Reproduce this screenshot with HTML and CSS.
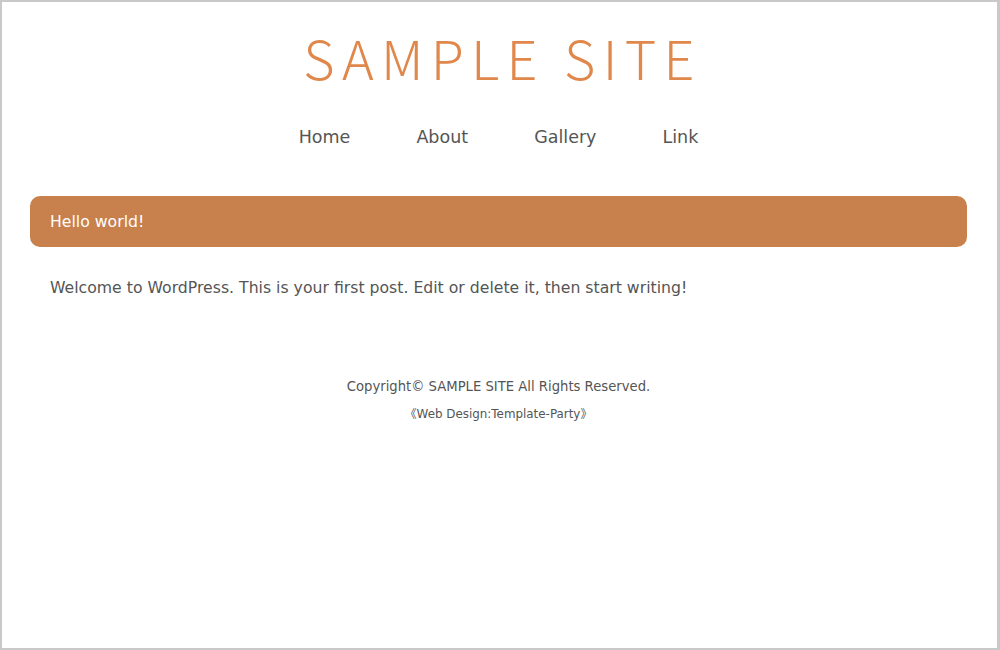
FILE: index.html
```html
<!DOCTYPE html>
<html>
	<head>
		<meta charset="UTF-8">
		<title>SAMPLE SITE</title>
		<link rel="stylesheet" href="styles.css">
	</head>
	<body>
		<div id="frame">
			<header id="header">
				<h1 class="logo">SAMPLE SITE</h1>
				<ul class="menu">
					<li><a href="#">Home</a></li>
					<li><a href="#">About</a></li>
					<li><a href="#">Gallery</a></li>
					<li><a href="#">Link</a></li>
				</ul>
			</header>
			<div id="main">
				<h2 class="post-title">Hello world!</h2>
				<p class="post-body">Welcome to WordPress. This is your first post. Edit or delete it, then start writing!</p>
			</div>
			<footer id="footer">
				<p class="copy">Copyright© SAMPLE SITE All Rights Reserved.</p>
				<p class="credit">《Web Design:Template-Party》</p>
			</footer>
		</div>
	</body>
</html>
```
FILE: styles.css
```css
html, body{
	margin: 0;
	padding: 0;
	background: #fff;
}
body{
	font-family: "DejaVu Sans", "Noto Sans CJK JP", sans-serif;
	color: #555;
}
#frame{
	box-sizing: border-box;
	width: 1000px;
	height: 650px;
	border: 2px solid #c9c9c9;
	border-right-width: 3px;
	padding: 0 30px 0 28px;
}
#header{
	text-align: center;
	padding-top: 22px;
}
.logo{
	margin: 0 0 0 8px;
	font-family: "Noto Sans CJK JP", sans-serif;
	font-weight: 200;
	font-size: 54px;
	line-height: 66px;
	letter-spacing: 7.3px;
	color: #e0884c;
}
.menu{
	list-style: none;
	margin: 34px 0 0;
	padding: 0;
	display: flex;
	justify-content: center;
	gap: 66px;
}
.menu a{
	color: #555;
	text-decoration: none;
	font-size: 17.5px;
	line-height: 26px;
}
#main{
	margin-top: 46px;
}
.post-title{
	margin: 0;
	background: #c8804c;
	color: #fff;
	font-weight: normal;
	font-size: 15.7px;
	line-height: 51px;
	padding: 0 20px;
	border-radius: 10px;
}
.post-body{
	margin: 26px 0 0;
	padding: 0 20px;
	font-size: 15.7px;
	line-height: 30px;
}
#footer{
	text-align: center;
	margin-top: 71px;
}
.copy{
	margin: 0;
	font-size: 13.2px;
	line-height: 26px;
}
.credit{
	margin: 2px 0 0;
	font-size: 11.9px;
	line-height: 24px;
}
```
